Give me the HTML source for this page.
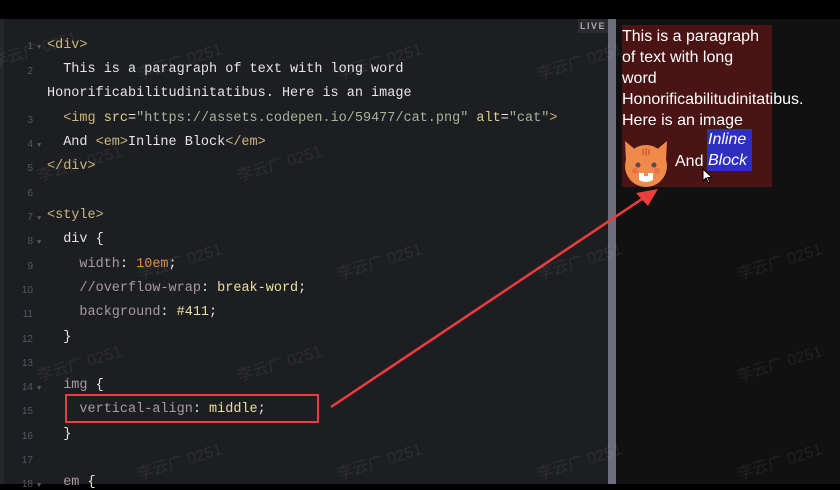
<!DOCTYPE html>
<html><head><meta charset="utf-8"><style>
*{margin:0;padding:0;box-sizing:border-box}
body{width:840px;height:484px;overflow:hidden;background:#000;position:relative;font-family:"Liberation Mono",monospace}
#top{position:absolute;left:0;top:0;width:840px;height:19px;background:#000}
#ed{position:absolute;left:0;top:19px;width:608px;height:465px;background:#1d1e22;overflow:hidden}
#strip{position:absolute;left:0;top:19px;width:4px;height:465px;background:#26272b}
#div{position:absolute;left:608px;top:19px;width:8px;height:465px;background:#6c6f7b}
#pv{position:absolute;left:616px;top:19px;width:224px;height:465px;background:#111}
.ln{position:absolute;left:0;width:36px;text-align:right;font-size:10px;color:#555861;font-family:"Liberation Sans",sans-serif}
.fold{position:absolute;left:37px;font-size:7px;color:#555861}
.c{position:absolute;left:47px;font-size:13.5px;color:#e6e6e6;white-space:pre;letter-spacing:0}
.t{color:#c8b57e}.a{color:#d8d08a}.s{color:#a8b39a}.p{color:#a89aa4}.v{color:#e9e0a0}.n{color:#e08a3a}
#live{position:absolute;left:578px;top:19px;width:30px;height:14px;background:#2a2b30;color:#aaa;font:bold 9px "Liberation Sans",sans-serif;letter-spacing:1.5px;text-align:center;line-height:14px}
#box{position:absolute;left:622px;top:25px;width:150px;height:162px;background:#4a1414;color:#fff;font:16px/21px "Liberation Sans",sans-serif}
.wm{position:absolute;color:rgba(255,255,255,0.07);font:16px "Liberation Sans","Noto Sans CJK SC",sans-serif;transform:rotate(-17deg);white-space:nowrap}
</style></head><body>
<div id="top"></div>
<div id="ed"></div>
<div id="strip"></div>
<div id="div"></div>
<div id="pv"></div>
<div id="live">LIVE</div>

<div style="position:absolute;left:0;top:3px">
<div class="ln" style="top:38px;width:33px">1</div><div class="fold" style="top:41px">▼</div>
<div class="c" style="top:35px"><span class="t">&lt;div&gt;</span></div>
<div class="ln" style="top:63px;width:33px">2</div>
<div class="c" style="top:59px">  This is a paragraph of text with long word</div>
<div class="c" style="top:83px">Honorificabilitudinitatibus. Here is an image</div>
<div class="ln" style="top:112px;width:33px">3</div>
<div class="c" style="top:108px">  <span class="t">&lt;img</span> <span class="a">src</span>=<span class="s">"https://assets.codepen.io/59477/cat.png"</span> <span class="a">alt</span>=<span class="s">"cat"</span><span class="t">&gt;</span></div>
<div class="ln" style="top:136px;width:33px">4</div><div class="fold" style="top:139px">▼</div>
<div class="c" style="top:132px">  And <span class="t">&lt;em&gt;</span>Inline Block<span class="t">&lt;/em&gt;</span></div>
<div class="ln" style="top:160px;width:33px">5</div>
<div class="c" style="top:156px"><span class="t">&lt;/div&gt;</span></div>
<div class="ln" style="top:185px;width:33px">6</div>
<div class="ln" style="top:209px;width:33px">7</div><div class="fold" style="top:212px">▼</div>
<div class="c" style="top:205px"><span class="t">&lt;style&gt;</span></div>
<div class="ln" style="top:233px;width:33px">8</div><div class="fold" style="top:236px">▼</div>
<div class="c" style="top:229px">  div {</div>
<div class="ln" style="top:258px;width:33px">9</div>
<div class="c" style="top:254px">    <span class="p">width</span>: <span class="n">10em</span>;</div>
<div class="ln" style="top:282px;width:33px">10</div>
<div class="c" style="top:278px">    <span class="p">//overflow-wrap</span>: <span class="v">break-word</span>;</div>
<div class="ln" style="top:306px;width:33px">11</div>
<div class="c" style="top:302px">    <span class="p">background</span>: <span class="v">#411</span>;</div>
<div class="ln" style="top:331px;width:33px">12</div>
<div class="c" style="top:327px">  }</div>
<div class="ln" style="top:355px;width:33px">13</div>
<div class="ln" style="top:379px;width:33px">14</div><div class="fold" style="top:382px">▼</div>
<div class="c" style="top:375px">  <span class="p">img</span> {</div>
<div class="ln" style="top:403px;width:33px">15</div>
<div class="c" style="top:399px">    <span class="p">vertical-align</span>: <span class="v">middle</span>;</div>
<div class="ln" style="top:428px;width:33px">16</div>
<div class="c" style="top:424px">  }</div>
<div class="ln" style="top:452px;width:33px">17</div>
<div class="ln" style="top:476px;width:33px">18</div><div class="fold" style="top:479px">▼</div>
<div class="c" style="top:472px">  <span class="p">em</span> {</div>
</div>

<div id="box">
<div style="position:absolute;left:0;top:1px;white-space:nowrap">This is a paragraph<br>of text with long<br>word<br>Honorificabilitudinitatibus.<br>Here is an image</div>
<svg style="position:absolute;left:0;top:112px" width="48" height="50" viewBox="0 0 48 50">
<path d="M3 4 L16 15 L32 15 L45 4 L44 24 L4 24 Z" fill="#f08a4b"/>
<circle cx="24" cy="29" r="21" fill="#f08a4b"/>
<path d="M21 12v6M27 12v6M24 11v8" stroke="#d8683a" stroke-width="2"/>
<circle cx="16" cy="28" r="2.5" fill="#5a4a4a"/><circle cx="32" cy="28" r="2.5" fill="#5a4a4a"/>
<circle cx="13" cy="34" r="3" fill="#e8704a"/><circle cx="35" cy="34" r="3" fill="#e8704a"/>
<path d="M17 36 h14 v7 q-7 4 -14 0 Z" fill="#fff"/>
<path d="M22 36 h4 v3 h-4z" fill="#f08a4b"/>
</svg>
<span style="position:absolute;left:53px;top:126px">And</span>
<div style="position:absolute;left:85px;top:104px;width:45px;height:42px;background:#2e2fc0;font-style:italic;line-height:21px;padding-left:1px">Inline<br>Block</div>
</div>
<svg style="position:absolute;left:702px;top:168px" width="12" height="16" viewBox="0 0 12 16"><path d="M1 1 L1 13 L4 10 L6.5 15 L8 14.3 L5.7 9.5 L10 9.5 Z" fill="#fff" stroke="#000" stroke-width="1"/></svg>

<div style="position:absolute;left:65px;top:394px;width:254px;height:29px;border:2px solid #e8403f"></div>
<svg style="position:absolute;left:0;top:0" width="840" height="484">
<line x1="331" y1="407" x2="645" y2="197" stroke="#ee3d3d" stroke-width="2.5"/>
<polygon points="658,189 636,193 648,206" fill="#ee3d3d"/>
</svg>

<div class="wm" style="left:-10px;top:36px">李云广 0251</div>
<div class="wm" style="left:135px;top:48px">李云广 0251</div>
<div class="wm" style="left:335px;top:48px">李云广 0251</div>
<div class="wm" style="left:535px;top:48px">李云广 0251</div>
<div class="wm" style="left:35px;top:150px">李云广 0251</div>
<div class="wm" style="left:235px;top:150px">李云广 0251</div>
<div class="wm" style="left:135px;top:248px">李云广 0251</div>
<div class="wm" style="left:335px;top:248px">李云广 0251</div>
<div class="wm" style="left:535px;top:248px">李云广 0251</div>
<div class="wm" style="left:735px;top:248px">李云广 0251</div>
<div class="wm" style="left:35px;top:350px">李云广 0251</div>
<div class="wm" style="left:235px;top:350px">李云广 0251</div>
<div class="wm" style="left:735px;top:350px">李云广 0251</div>
<div class="wm" style="left:135px;top:448px">李云广 0251</div>
<div class="wm" style="left:335px;top:448px">李云广 0251</div>
<div class="wm" style="left:535px;top:448px">李云广 0251</div>
<div class="wm" style="left:735px;top:448px">李云广 0251</div>
</body></html>
